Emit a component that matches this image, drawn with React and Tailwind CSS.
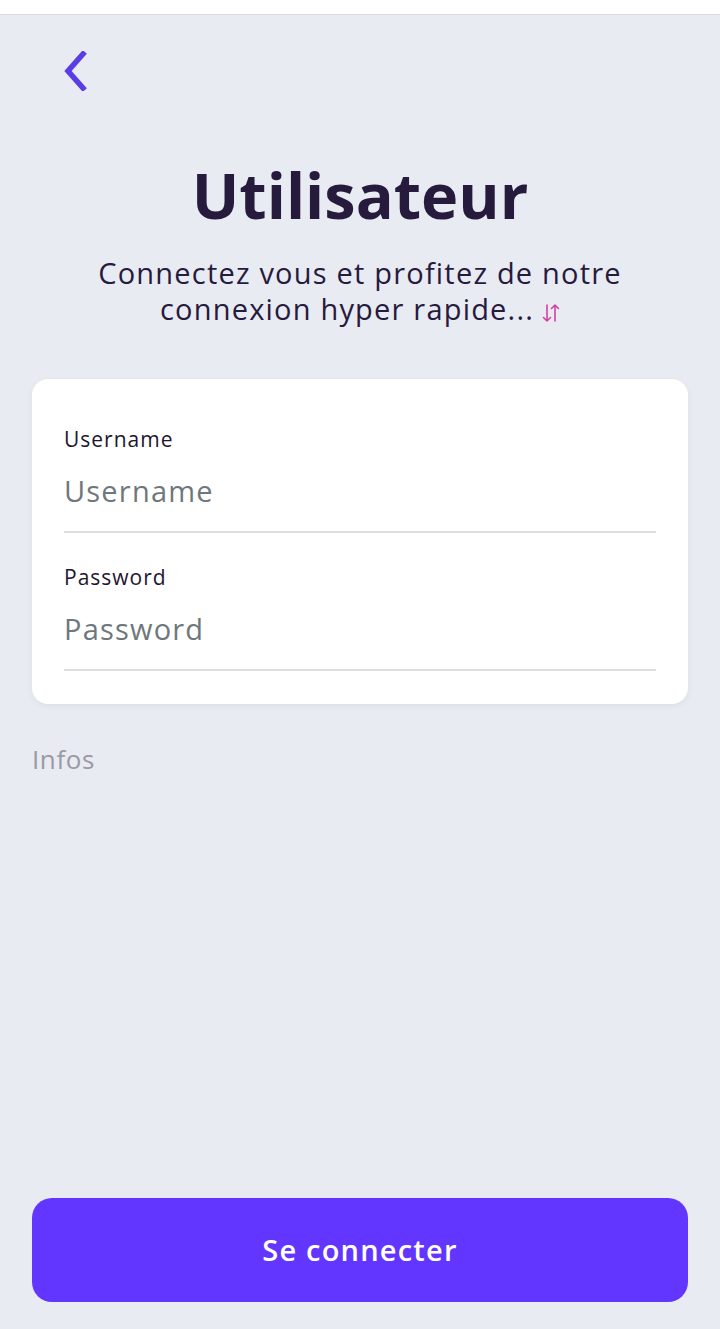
import React from "react";

function Arrows() {
  return (
    <svg width="18" height="22" viewBox="0 0 18 22" fill="none" className="inline-block align-[-4px] ml-[8px]">
      <path d="M5 3 V19 M1.5 15.5 L5 19 L8.5 15.5" stroke="#d6409f" strokeWidth="1.6" strokeLinecap="round" strokeLinejoin="round" />
      <path d="M13 19 V3 M9.5 6.5 L13 3 L16.5 6.5" stroke="#d6409f" strokeWidth="1.6" strokeLinecap="round" strokeLinejoin="round" />
    </svg>
  );
}

function Field({ label, first }) {
  return (
    <div className={first ? "flex flex-col" : "flex flex-col mt-[32px]"}>
      <label className="text-[21px] leading-[24px] font-medium tracking-[1px] text-[#1e1530]">{label}</label>
      <div className="mt-[21px] pb-[21px] border-b-2 border-[#dcdde0] text-[29px] leading-[38px] tracking-[1.2px] text-[#6e787c]">
        {label}
      </div>
    </div>
  );
}

export default function App() {
  const font = { fontFamily: '"Open Sans", "Noto Sans", sans-serif' };
  return (
    <div className="w-[720px] h-[1329px] bg-[#e9ebf3] flex flex-col" style={font}>
      <div className="h-[15px] bg-white border-b border-[#dcdde1] shrink-0" />
      <div className="flex-1 flex flex-col px-8">
        <div className="pt-[36px] pl-[29px] h-[88px]">
          <svg width="28" height="40" viewBox="0 0 28 40" fill="none">
            <path d="M22 3 L7 20 L22 37" stroke="#5b3de6" strokeWidth="5.5" strokeLinecap="square" strokeLinejoin="miter" />
          </svg>
        </div>
        <h1 className="mt-[54px] text-center text-[63px] leading-[76px] font-bold text-[#261a3d]">
          Utilisateur
        </h1>
        <div className="mt-[22px] flex flex-col items-center text-[29px] leading-[36px] tracking-[1.2px] text-[#261a3d] font-medium">
          <p>Connectez vous et profitez de notre</p>
          <p>
            connexion hyper rapide...
            <Arrows />
          </p>
        </div>
        <div className="mt-[52px] bg-white rounded-2xl shadow-[0_2px_6px_rgba(0,0,0,0.06)] px-8 pt-[48px] pb-[33px] flex flex-col">
          <Field label="Username" first />
          <Field label="Password" />
        </div>
        <div className="mt-[39px] text-[26px] leading-[32px] tracking-[0.6px] text-[#9a99a6]">Infos</div>
        <div className="flex-1" />
        <button className="mb-[27px] h-[104px] w-full rounded-[20px] bg-[#6236ff] text-white text-[29px] tracking-[1.2px] font-semibold">
          Se connecter
        </button>
      </div>
    </div>
  );
}
